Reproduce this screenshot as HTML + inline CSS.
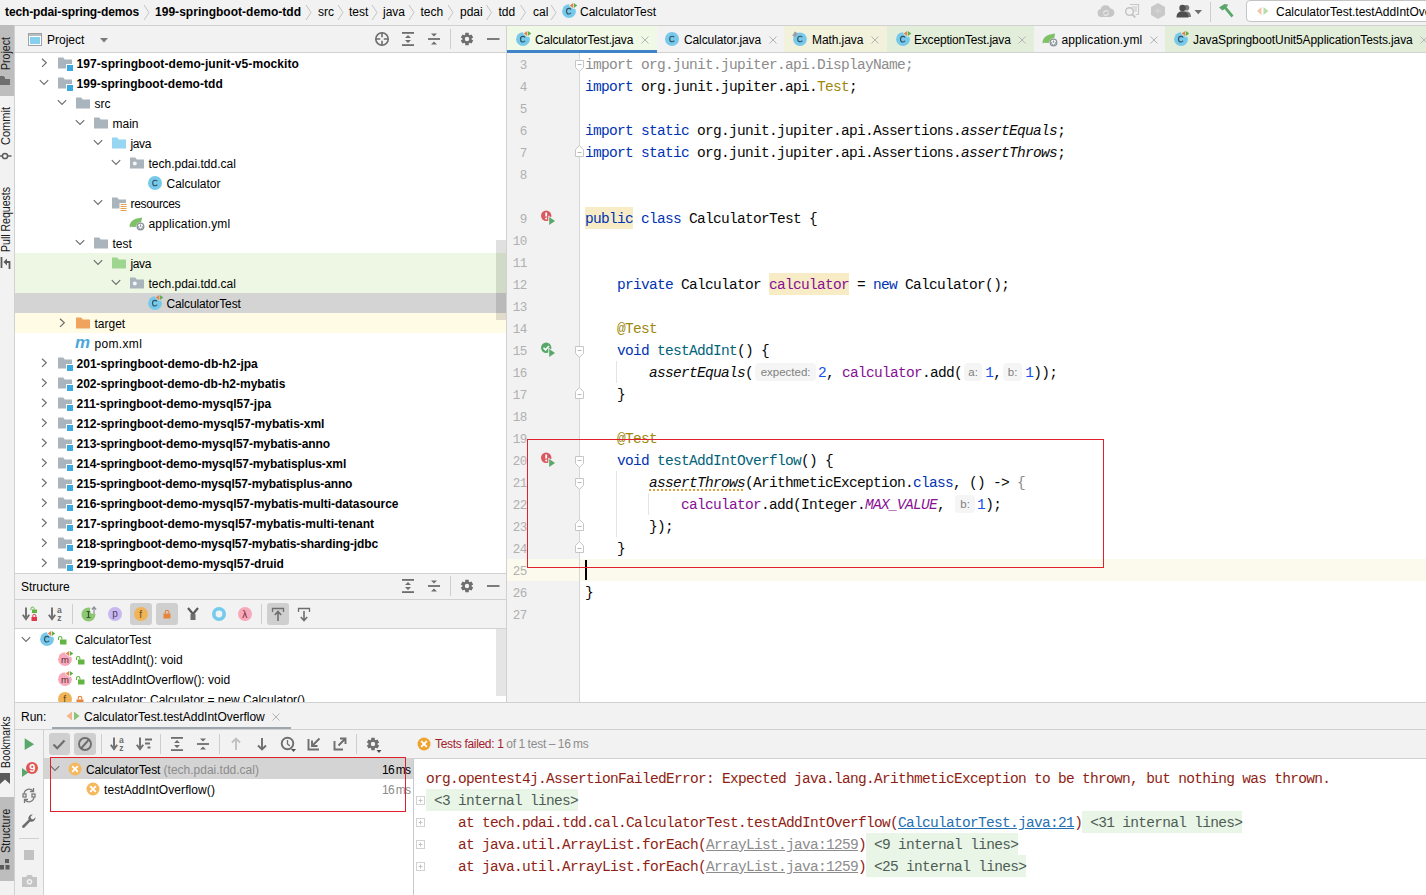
<!DOCTYPE html>
<html>
<head>
<meta charset="utf-8">
<title>IDE</title>
<style>
*{box-sizing:border-box;margin:0;padding:0}
html,body{width:1426px;height:895px;overflow:hidden;background:#f2f2f2}
body{font-family:"Liberation Sans",sans-serif;font-size:12px;color:#000;position:relative}
.abs{position:absolute}
.ui{font-family:"Liberation Sans",sans-serif;font-size:12px;white-space:pre;line-height:14px}
.b{font-weight:bold;letter-spacing:-0.05px}
.mono{font-family:"Liberation Mono",monospace;white-space:pre}
svg{display:block;position:absolute;overflow:visible}
/* navbar */
#nav{left:0;top:0;width:1426px;height:25px;background:#f2f2f2}
#nav .t{position:absolute;top:5px}
.hline{position:absolute;height:1px;background:#d1d1d1}
.vline{position:absolute;width:1px;background:#d1d1d1}
/* left stripe */
#stripe{left:0;top:25px;width:14px;height:870px;background:#f2f2f2}
.rot{position:absolute;transform-origin:0 0;transform:rotate(-90deg);white-space:pre;font-size:12px;line-height:14px;color:#1a1a1a}
/* project */
#proj{left:15px;top:26px;width:491px;height:547px;background:#fff}
.row{position:absolute;left:0;width:491px;height:20px}
.row .t{position:absolute;top:4px;white-space:pre;line-height:14px}
/* editor */
#tabs{left:507px;top:26px;width:919px;height:27px;background:#f2f2f2}
.tab{position:absolute;top:0;height:26px}
.tab .t{position:absolute;top:6px;white-space:pre;line-height:14px}
#gutter{left:507px;top:53px;width:72px;height:649px;background:#f0f0f0}
#editor{left:580px;top:53px;width:846px;height:649px;background:#fff}
.ln{position:absolute;left:507px;width:20px;text-align:right;font-family:"Liberation Mono",monospace;font-size:12.6px;color:#b0b0b0;line-height:22px;height:22px;letter-spacing:-0.4px;padding-top:2px}
.cl{position:absolute;left:585px;height:22px;font-family:"Liberation Mono",monospace;font-size:14.5px;letter-spacing:-0.7px;white-space:pre;color:#080808;line-height:24px}
.cl .hl{display:inline-block;height:22px;vertical-align:top;background:#f7ecc6}
.k{color:#0033b3}.an{color:#9e880d}.f{color:#871094}.m{color:#00627a}.n{color:#1750eb}.g{color:#8c8c8c}.i{font-style:italic}
.hint{display:inline-block;font-family:"Liberation Sans",sans-serif;font-size:11.5px;color:#808080;background:#f5f5f5;border-radius:4px;height:18px;line-height:18px;vertical-align:top;margin-top:2px;padding:0;text-align:center;letter-spacing:0}
.wavy{text-decoration:underline dotted #d9a343;text-decoration-thickness:1.500px;text-underline-offset:2px}
/* console */
.co{position:absolute;left:426px;height:22px;line-height:24px;font-family:"Liberation Mono",monospace;font-size:14.5px;letter-spacing:-0.7px;white-space:pre;color:#8f1d14}
.co span{display:inline-block;height:22px;vertical-align:top}
.fo{background:#e9f5e6;color:#4d5d55}
.lk{color:#2470b3;text-decoration:underline}
.lg{color:#8c8c8c;text-decoration:underline}
</style>
</head>
<body>
<svg width="0" height="0" style="position:absolute">
<defs>
<!-- chevrons -->
<symbol id="chr" viewBox="0 0 16 16"><path d="M6 3.7 L10.3 7.8 L6 11.9" fill="none" stroke="#6e6e6e" stroke-width="1.2"/></symbol>
<symbol id="chd" viewBox="0 0 16 16"><path d="M3.8 5.2 L8 9.4 L12.2 5.2" fill="none" stroke="#6e6e6e" stroke-width="1.2"/></symbol>
<!-- folders -->
<symbol id="fgrey" viewBox="0 0 16 16"><path d="M1 2.5h5.2l1.6 2H15v9H1z" fill="#aab4bc"/></symbol>
<symbol id="fmod" viewBox="0 0 16 16"><path d="M1 2.5h5.2l1.6 2H15v4.5H9v4.5H1z" fill="#aab4bc"/><rect x="10" y="10" width="6" height="6" fill="#3aa9e0"/></symbol>
<symbol id="fblue" viewBox="0 0 16 16"><path d="M1 2.5h5.2l1.6 2H15v9H1z" fill="#97d6f2"/></symbol>
<symbol id="fgreen" viewBox="0 0 16 16"><path d="M1 2.5h5.2l1.6 2H15v9H1z" fill="#9fd68f"/></symbol>
<symbol id="forange" viewBox="0 0 16 16"><path d="M1 2.5h5.2l1.6 2H15v9H1z" fill="#f0a35e"/></symbol>
<symbol id="fpkg" viewBox="0 0 16 16"><path d="M1 2.500h5.200l1.600 2H15v9H1z" fill="#aab4bc"/><circle cx="5.800" cy="8.500" r="2" fill="#f4f6f7"/></symbol>
<symbol id="fres" viewBox="0 0 16 16"><path d="M1 2.500h5.200l1.600 2H15v3.500H8.500v5.500H1z" fill="#aab4bc"/><path d="M9.500 9.500h6M9.500 11.500h6M9.500 13.500h6M9.500 15.500h6" stroke="#e9a14e" stroke-width="1"/></symbol>
<!-- class -->
<symbol id="cls" viewBox="0 0 16 16"><circle cx="8" cy="8" r="7" fill="#76c9ea"/><path d="M10.300 9.600c-.5.800-1.200 1.200-2.100 1.200-1.500 0-2.500-1.100-2.500-2.800s1-2.800 2.500-2.800c.9 0 1.600.4 2.100 1.100" fill="none" stroke="#33515f" stroke-width="1.100"/></symbol>
<symbol id="clst" viewBox="0 0 16 16"><mask id="mkc"><rect width="16" height="16" fill="#fff"/><path d="M8.300 0H16v5.800H12L8.300 3z" fill="#000"/></mask><circle cx="8" cy="8.200" r="6.900" fill="#76c9ea" mask="url(#mkc)"/><path d="M10.100 9.800c-.5.800-1.200 1.200-2.100 1.200-1.500 0-2.500-1.100-2.500-2.800s1-2.800 2.500-2.800c.9 0 1.600.4 2.100 1.100" fill="none" stroke="#33515f" stroke-width="1.100"/><path d="M12.100 0v5L8.700 2.500z" fill="#e8804a"/><path d="M12.800 0v5L16.300 2.500z" fill="#5fae4f"/></symbol>
<symbol id="mvn" viewBox="0 0 16 16"><text x="0" y="13" font-family="Liberation Sans" font-style="italic" font-weight="bold" font-size="16" fill="#4aa7dc" textLength="15" lengthAdjust="spacingAndGlyphs">m</text></symbol>
<symbol id="yml" viewBox="0 0 16 16"><path d="M.5 11.500c.5-5.500 4.500-8 12.500-9 0 5-2.500 9.500-8 9.500-1 0-2-.2-2.800-.6L1 12.500z" fill="#80c168"/><circle cx="11.500" cy="11.500" r="4.300" fill="#fff"/><circle cx="11.500" cy="11.500" r="3.300" fill="none" stroke="#8a9299" stroke-width="1.300"/><path d="M11.500 9.500v2.200" stroke="#8a9299" stroke-width="1.100"/><path d="M10 10.800a1.900 1.900 0 1 0 3 0" fill="none" stroke="#8a9299" stroke-width="1"/></symbol>
<symbol id="gear" viewBox="0 0 16 16"><path fill-rule="evenodd" fill="#6e6e6e" d="M6.12 3.80 L6.29 1.83 L9.71 1.83 L9.88 3.80 L10.70 4.28 L12.49 3.44 L14.20 6.39 L12.58 7.52 L12.58 8.48 L14.20 9.61 L12.49 12.56 L10.70 11.72 L9.88 12.20 L9.71 14.17 L6.29 14.17 L6.12 12.20 L5.30 11.72 L3.51 12.56 L1.80 9.61 L3.42 8.48 L3.42 7.52 L1.80 6.39 L3.51 3.44 L5.30 4.28Z M8 5.800a2.200 2.200 0 1 0 0 4.400a2.200 2.200 0 1 0 0-4.400z"/></symbol>

<symbol id="unlock" viewBox="0 0 10 10"><rect x="3" y="4.500" width="6.500" height="5" fill="#62b543"/><path d="M1.500 5V3.200a1.700 1.700 0 0 1 3.400 0V4.500" fill="none" stroke="#62b543" stroke-width="1.100"/></symbol>
<symbol id="lock" viewBox="0 0 10 10"><rect x="1.500" y="4.500" width="7" height="5" fill="#e8833a"/><path d="M3.200 4.500V3.200a1.800 1.800 0 0 1 3.600 0V4.500" fill="none" stroke="#e8833a" stroke-width="1.100"/></symbol>
<symbol id="meth" viewBox="0 0 16 16"><mask id="mkm"><rect width="16" height="16" fill="#fff"/><path d="M8.300 0H16v5.800H12L8.300 3z" fill="#000"/></mask><circle cx="8" cy="8.200" r="6.900" fill="#f7a9ba" mask="url(#mkm)"/><text x="4" y="11.500" font-family="Liberation Sans" font-size="9.500" fill="#5a2a35">m</text><path d="M12.100 0v5L8.700 2.500z" fill="#e8804a"/><path d="M12.800 0v5L16.300 2.500z" fill="#5fae4f"/></symbol>
<symbol id="fld" viewBox="0 0 16 16"><circle cx="8" cy="8" r="7" fill="#f0b458"/><text x="6.200" y="11.500" font-family="Liberation Sans" font-size="10" fill="#6b4a17">f</text></symbol>
<symbol id="clsp" viewBox="0 0 16 16"><circle cx="8" cy="8.300" r="6.800" fill="#76c9ea"/><path d="M10.300 9.600c-.5.800-1.200 1.200-2.100 1.200-1.500 0-2.500-1.100-2.500-2.800s1-2.800 2.500-2.800c.9 0 1.600.4 2.100 1.100" fill="none" stroke="#33515f" stroke-width="1.100"/><path d="M.3 4.800L2.800.5l3 1.700L3.300 6.300z" fill="#9aa0a5"/></symbol>
</defs>
</svg>

<div id="nav" class="abs ui">
<span class="t b" style="left:5px;letter-spacing:-0.12px">tech-pdai-spring-demos</span>
<span class="t b" style="left:155px;letter-spacing:0.03px">199-springboot-demo-tdd</span>
<span class="t" style="left:318px">src</span>
<span class="t" style="left:349px">test</span>
<span class="t" style="left:383px">java</span>
<span class="t" style="left:420.500px">tech</span>
<span class="t" style="left:460px">pdai</span>
<span class="t" style="left:498.500px">tdd</span>
<span class="t" style="left:533px">cal</span>
<span class="t" style="left:580px">CalculatorTest</span>
<svg style="left:0;top:0" width="700" height="25"><g fill="none" stroke="#c4c4c4" stroke-width="1">
<path d="M144 5l5 7.500-5 7.500"/><path d="M306 5l5 7.500-5 7.500"/><path d="M338 5l5 7.500-5 7.500"/><path d="M372 5l5 7.500-5 7.500"/><path d="M409 5l5 7.500-5 7.500"/><path d="M448 5l5 7.500-5 7.500"/><path d="M486.500 5l5 7.500-5 7.500"/><path d="M520.500 5l5 7.500-5 7.500"/><path d="M551 5l5 7.500-5 7.500"/></g></svg>
<svg style="left:561px;top:3px" width="16" height="16"><use href="#clst"/></svg>
<!-- right toolbar -->
<svg style="left:1097px;top:4px" width="18" height="14"><path d="M4.500 13a4 4 0 0 1-.8-7.900A5 5 0 0 1 13.300 4.500 4.200 4.200 0 0 1 13 13z" fill="#c6c6c6"/><path d="M6.500 9.500a2.800 2.800 0 0 1 4.800-2M11.500 8.500a2.800 2.800 0 0 1-4.800 2" stroke="#e6e6e6" stroke-width="1.100" fill="none"/></svg>
<svg style="left:1124px;top:3px" width="16" height="16"><path d="M6 1.500h8.500v10h-3" fill="none" stroke="#c8c8c8" stroke-width="1.200"/><path d="M8 4h5M9.500 6h3.500M10 8h3" stroke="#c8c8c8" stroke-width="1"/><circle cx="5.500" cy="8.500" r="3.800" fill="#f2f2f2" stroke="#c2c2c2" stroke-width="1.400"/><path d="M8.300 11.300l3 3.200" stroke="#c2c2c2" stroke-width="1.800"/></svg>
<svg style="left:1150px;top:2px" width="16" height="18"><path d="M8 1l7 4v8l-7 4-7-4V5z" fill="#c9c9c9"/><path d="M5 9h6M8 6.500v5" stroke="#d8d8d8" stroke-width="1"/></svg>
<svg style="left:1176px;top:4px" width="28" height="14"><circle cx="10.500" cy="3.800" r="2.800" fill="#7a7a7a"/><path d="M6 13c0-4 2-5.500 4.500-5.500s4.500 1.500 4.500 5.500z" fill="#7a7a7a"/><circle cx="6.500" cy="4" r="3.200" fill="#4f4f4f"/><path d="M.5 13.500c0-4.500 2.500-6.200 6-6.200s6 1.700 6 6.200z" fill="#4f4f4f"/><path d="M18.500 6h7.500l-3.750 4.200z" fill="#6e6e6e"/></svg>
<svg style="left:1218px;top:3px" width="17" height="16"><path d="M1 4.500L6.500 1l4 .8-2 2.200L15.500 12.500 13.500 14.500 6.500 6 4.500 7.500z" fill="#59a869"/></svg>

<div class="abs" style="left:1246px;top:0px;width:190px;height:22px;background:#fff;border:1px solid #c4c4c4;border-radius:4px"></div>
<svg style="left:1257px;top:7px" width="12" height="8"><path d="M4.500 0v8L0 4z" fill="#f4c4a8"/><path d="M6.500 0v8L11.500 4z" fill="#b9dcae"/></svg>
<span class="t" style="left:1276px;top:5px">CalculatorTest.testAddIntOverflow</span>
<div class="vline" style="left:1210px;top:2px;height:20px;background:#cdcdcd"></div>
</div>
<div class="hline" style="left:0;top:25px;width:1426px"></div>

<div id="stripe" class="abs" style="left:0;top:25px;width:14px;height:870px;background:#f2f2f2">
<div class="abs" style="left:0;top:0;width:14px;height:71px;background:#bdbdbd"></div>
<div class="abs" style="left:0;top:772px;width:14px;height:84px;background:#bdbdbd"></div>
<span class="rot" style="left:-1.500px;top:44.5px;transform:rotate(-90deg) scaleX(0.883)">Project</span>
<span class="rot" style="left:-1.500px;top:120px;transform:rotate(-90deg) scaleX(0.919)">Commit</span>
<span class="rot" style="left:-1.500px;top:227px;transform:rotate(-90deg) scaleX(0.878)">Pull Requests</span>
<span class="rot" style="left:-1.500px;top:742.5px;transform:rotate(-90deg) scaleX(0.861)">Bookmarks</span>
<span class="rot" style="left:-1.500px;top:828px;transform:rotate(-90deg) scaleX(0.912)">Structure</span>
<!-- icons -->
<svg style="left:0;top:50px" width="11" height="11"><path d="M0 1h3.500l1.500 1.500V4H10v6H0z" fill="#6e6e6e"/></svg>
<svg style="left:0;top:126px" width="12" height="10"><path d="M0 5h11.500" stroke="#5a5a5a" stroke-width="1.400"/><circle cx="5" cy="5" r="2.600" fill="#f2f2f2" stroke="#5a5a5a" stroke-width="1.500"/></svg>
<svg style="left:0;top:231px" width="12" height="14"><path d="M1.500 1v11" stroke="#5a5a5a" stroke-width="1.800"/><path d="M4.500 6h5v7" fill="none" stroke="#5a5a5a" stroke-width="1.800"/><path d="M7 2.500L3.500 6 7 9.500z" fill="#5a5a5a"/></svg>
<svg style="left:0;top:748px" width="11" height="12"><path d="M0 0h10v11L5 6.500 0 11z" fill="#5a5a5a"/></svg>
<svg style="left:0;top:834px" width="11" height="11"><rect x="5" y="0" width="4" height="4" fill="#5a5a5a"/><rect x="0" y="6" width="4" height="4.500" fill="#5a5a5a"/><rect x="5.500" y="6" width="4" height="4.500" fill="#5a5a5a"/></svg>
</div>
<div class="vline" style="left:14px;top:26px;height:869px"></div>

<div class="abs" style="left:15px;top:26px;width:491px;height:26px;background:#f2f2f2"></div>
<div class="hline" style="left:15px;top:52px;width:491px"></div>
<div id="proj" class="abs ui" style="left:15px;top:53px;width:491px;height:520px;background:#fff;overflow:hidden">
<div class="row" style="top:0px;">
<svg style="left:21px;top:2px" width="16" height="16"><use href="#chr"/></svg>
<svg style="left:42px;top:2px" width="16" height="16"><use href="#fmod"/></svg>
<span class="t b" style="left:61.5px;letter-spacing:0.088px">197-springboot-demo-junit-v5-mockito</span>
</div>
<div class="row" style="top:20px;">
<svg style="left:21px;top:2px" width="16" height="16"><use href="#chd"/></svg>
<svg style="left:42px;top:2px" width="16" height="16"><use href="#fmod"/></svg>
<span class="t b" style="left:61.5px;letter-spacing:0.042px">199-springboot-demo-tdd</span>
</div>
<div class="row" style="top:40px;">
<svg style="left:39px;top:2px" width="16" height="16"><use href="#chd"/></svg>
<svg style="left:60px;top:2px" width="16" height="16"><use href="#fgrey"/></svg>
<span class="t" style="left:79.5px">src</span>
</div>
<div class="row" style="top:60px;">
<svg style="left:57px;top:2px" width="16" height="16"><use href="#chd"/></svg>
<svg style="left:78px;top:2px" width="16" height="16"><use href="#fgrey"/></svg>
<span class="t" style="left:97.5px">main</span>
</div>
<div class="row" style="top:80px;">
<svg style="left:75px;top:2px" width="16" height="16"><use href="#chd"/></svg>
<svg style="left:96px;top:2px" width="16" height="16"><use href="#fblue"/></svg>
<span class="t" style="left:115.5px;letter-spacing:-0.400px">java</span>
</div>
<div class="row" style="top:100px;">
<svg style="left:93px;top:2px" width="16" height="16"><use href="#chd"/></svg>
<svg style="left:114px;top:2px" width="16" height="16"><use href="#fpkg"/></svg>
<span class="t" style="left:133.5px">tech.pdai.tdd.cal</span>
</div>
<div class="row" style="top:120px;">
<svg style="left:132px;top:2px" width="16" height="16"><use href="#cls"/></svg>
<span class="t" style="left:151.5px">Calculator</span>
</div>
<div class="row" style="top:140px;">
<svg style="left:75px;top:2px" width="16" height="16"><use href="#chd"/></svg>
<svg style="left:96px;top:2px" width="16" height="16"><use href="#fres"/></svg>
<span class="t" style="left:115.5px;letter-spacing:-0.322px">resources</span>
</div>
<div class="row" style="top:160px;">
<svg style="left:114px;top:2px" width="16" height="16"><use href="#yml"/></svg>
<span class="t" style="left:133.5px;letter-spacing:0.160px">application.yml</span>
</div>
<div class="row" style="top:180px;">
<svg style="left:57px;top:2px" width="16" height="16"><use href="#chd"/></svg>
<svg style="left:78px;top:2px" width="16" height="16"><use href="#fgrey"/></svg>
<span class="t" style="left:97.5px">test</span>
</div>
<div class="row" style="top:200px;background:#eef7e3;">
<svg style="left:75px;top:2px" width="16" height="16"><use href="#chd"/></svg>
<svg style="left:96px;top:2px" width="16" height="16"><use href="#fgreen"/></svg>
<span class="t" style="left:115.5px;letter-spacing:-0.400px">java</span>
</div>
<div class="row" style="top:220px;background:#eef7e3;">
<svg style="left:93px;top:2px" width="16" height="16"><use href="#chd"/></svg>
<svg style="left:114px;top:2px" width="16" height="16"><use href="#fpkg"/></svg>
<span class="t" style="left:133.5px">tech.pdai.tdd.cal</span>
</div>
<div class="row" style="top:240px;background:#d4d4d4;">
<svg style="left:132px;top:2px" width="16" height="16"><use href="#clst"/></svg>
<span class="t" style="left:151.5px;letter-spacing:-0.129px">CalculatorTest</span>
</div>
<div class="row" style="top:260px;background:#fffbe5;">
<svg style="left:39px;top:2px" width="16" height="16"><use href="#chr"/></svg>
<svg style="left:60px;top:2px" width="16" height="16"><use href="#forange"/></svg>
<span class="t" style="left:79.5px">target</span>
</div>
<div class="row" style="top:280px;">
<svg style="left:60px;top:2px" width="16" height="16"><use href="#mvn"/></svg>
<span class="t" style="left:79.5px;letter-spacing:0.329px">pom.xml</span>
</div>
<div class="row" style="top:300px;">
<svg style="left:21px;top:2px" width="16" height="16"><use href="#chr"/></svg>
<svg style="left:42px;top:2px" width="16" height="16"><use href="#fmod"/></svg>
<span class="t b" style="left:61.5px;letter-spacing:0.022px">201-springboot-demo-db-h2-jpa</span>
</div>
<div class="row" style="top:320px;">
<svg style="left:21px;top:2px" width="16" height="16"><use href="#chr"/></svg>
<svg style="left:42px;top:2px" width="16" height="16"><use href="#fmod"/></svg>
<span class="t b" style="left:61.5px;letter-spacing:0.006px">202-springboot-demo-db-h2-mybatis</span>
</div>
<div class="row" style="top:340px;">
<svg style="left:21px;top:2px" width="16" height="16"><use href="#chr"/></svg>
<svg style="left:42px;top:2px" width="16" height="16"><use href="#fmod"/></svg>
<span class="t b" style="left:61.5px;letter-spacing:-0.025px">211-springboot-demo-mysql57-jpa</span>
</div>
<div class="row" style="top:360px;">
<svg style="left:21px;top:2px" width="16" height="16"><use href="#chr"/></svg>
<svg style="left:42px;top:2px" width="16" height="16"><use href="#fmod"/></svg>
<span class="t b" style="left:61.5px;letter-spacing:-0.021px">212-springboot-demo-mysql57-mybatis-xml</span>
</div>
<div class="row" style="top:380px;">
<svg style="left:21px;top:2px" width="16" height="16"><use href="#chr"/></svg>
<svg style="left:42px;top:2px" width="16" height="16"><use href="#fmod"/></svg>
<span class="t b" style="left:61.5px;letter-spacing:-0.078px">213-springboot-demo-mysql57-mybatis-anno</span>
</div>
<div class="row" style="top:400px;">
<svg style="left:21px;top:2px" width="16" height="16"><use href="#chr"/></svg>
<svg style="left:42px;top:2px" width="16" height="16"><use href="#fmod"/></svg>
<span class="t b" style="left:61.5px;letter-spacing:-0.086px">214-springboot-demo-mysql57-mybatisplus-xml</span>
</div>
<div class="row" style="top:420px;">
<svg style="left:21px;top:2px" width="16" height="16"><use href="#chr"/></svg>
<svg style="left:42px;top:2px" width="16" height="16"><use href="#fmod"/></svg>
<span class="t b" style="left:61.5px;letter-spacing:-0.127px">215-springboot-demo-mysql57-mybatisplus-anno</span>
</div>
<div class="row" style="top:440px;">
<svg style="left:21px;top:2px" width="16" height="16"><use href="#chr"/></svg>
<svg style="left:42px;top:2px" width="16" height="16"><use href="#fmod"/></svg>
<span class="t b" style="left:61.5px;letter-spacing:-0.054px">216-springboot-demo-mysql57-mybatis-multi-datasource</span>
</div>
<div class="row" style="top:460px;">
<svg style="left:21px;top:2px" width="16" height="16"><use href="#chr"/></svg>
<svg style="left:42px;top:2px" width="16" height="16"><use href="#fmod"/></svg>
<span class="t b" style="left:61.5px;letter-spacing:0.019px">217-springboot-demo-mysql57-mybatis-multi-tenant</span>
</div>
<div class="row" style="top:480px;">
<svg style="left:21px;top:2px" width="16" height="16"><use href="#chr"/></svg>
<svg style="left:42px;top:2px" width="16" height="16"><use href="#fmod"/></svg>
<span class="t b" style="left:61.5px;letter-spacing:-0.120px">218-springboot-demo-mysql57-mybatis-sharding-jdbc</span>
</div>
<div class="row" style="top:500px;">
<svg style="left:21px;top:2px" width="16" height="16"><use href="#chr"/></svg>
<svg style="left:42px;top:2px" width="16" height="16"><use href="#fmod"/></svg>
<span class="t b" style="left:61.5px;letter-spacing:-0.039px">219-springboot-demo-mysql57-druid</span>
</div>
<div class="abs" style="left:481px;top:187px;width:10px;height:80px;background:rgba(0,0,0,0.12)"></div>
</div>
<div class="vline" style="left:506px;top:26px;height:676px"></div>
<div class="abs ui" style="left:15px;top:26px;width:491px;height:26px">
<svg style="left:13px;top:7px" width="14" height="13"><rect x=".5" y=".5" width="13" height="12" fill="#fff" stroke="#9ba3a8"/><rect x="1" y="1" width="12" height="2" fill="#b9bdc0"/><rect x="2" y="4" width="10" height="7" fill="#87cfee"/></svg>
<span class="abs" style="left:32px;top:7px">Project</span>
<svg style="left:85px;top:12px" width="8" height="5"><path d="M0 0h8l-4 4.500z" fill="#7a7a7a"/></svg>
<svg style="left:359px;top:5px" width="16" height="16"><g fill="none" stroke="#6e6e6e" stroke-width="1.600"><circle cx="8" cy="8" r="6.200"/><path d="M8 1.500v4.800M8 9.700v4.800M1.500 8h4.800M9.700 8h4.800"/></g></svg>
<svg style="left:385px;top:5px" width="16" height="16"><g fill="#6e6e6e"><rect x="2" y="1" width="12" height="1.800"/><rect x="2" y="13.200" width="12" height="1.800"/><path d="M8 4l3 3h-6zM8 12l3-3h-6z"/></g></svg>
<svg style="left:411px;top:5px" width="16" height="16"><g fill="#6e6e6e"><rect x="2" y="7.100" width="12" height="1.800"/><path d="M8 5.500l3-3h-6zM8 10.500l3 3h-6z"/></g></svg>
<div class="vline" style="left:435px;top:3px;height:20px;background:#cdcdcd"></div>
<svg style="left:444px;top:5px" width="16" height="16"><use href="#gear"/></svg>
<svg style="left:471px;top:5px" width="16" height="16"><rect x="1" y="7.100" width="12.500" height="1.800" fill="#6e6e6e"/></svg>
</div>
<div class="hline" style="left:15px;top:573px;width:491px"></div>
<div id="struct" class="abs ui" style="left:15px;top:574px;width:491px;height:128px;background:#f2f2f2">
<span class="abs" style="left:6px;top:6px">Structure</span>
<svg style="left:385px;top:4px" width="16" height="16"><g fill="#6e6e6e"><rect x="2" y="1" width="12" height="1.800"/><rect x="2" y="13.200" width="12" height="1.800"/><path d="M8 4l3 3h-6zM8 12l3-3h-6z"/></g></svg>
<svg style="left:411px;top:4px" width="16" height="16"><g fill="#6e6e6e"><rect x="2" y="7.100" width="12" height="1.800"/><path d="M8 5.500l3-3h-6zM8 10.500l3 3h-6z"/></g></svg>
<div class="vline" style="left:435px;top:2px;height:20px;background:#cdcdcd"></div>
<svg style="left:444px;top:4px" width="16" height="16"><use href="#gear"/></svg>
<svg style="left:471px;top:4px" width="16" height="16"><rect x="1" y="7.100" width="12.500" height="1.800" fill="#6e6e6e"/></svg>
<div class="hline" style="left:0;top:25px;width:491px"></div>
<!-- toolbar y 26..54 ; center y=40 (abs 614) -->
<div class="abs" style="left:115px;top:29px;width:22px;height:22px;background:#cfcfcf;border-radius:3px"></div>
<div class="abs" style="left:141px;top:29px;width:22px;height:22px;background:#cfcfcf;border-radius:3px"></div>
<div class="abs" style="left:252px;top:29px;width:22px;height:22px;background:#cfcfcf;border-radius:3px"></div>
<svg style="left:7px;top:32px" width="16" height="16"><path d="M4 1.500v10" fill="none" stroke="#6e6e6e" stroke-width="1.900"/><path d="M.8 8.800L4 13.200 7.200 8.800" fill="none" stroke="#6e6e6e" stroke-width="1.900"/><rect x="10" y="3.500" width="5" height="3.500" fill="#62b543"/><path d="M9 4V2.500a1.500 1.500 0 0 1 3 0V3.500" fill="none" stroke="#62b543"/><rect x="9.500" y="11" width="5.500" height="4" fill="#e0384b"/><path d="M10.800 11V9.800a1.500 1.500 0 0 1 3 0V11" fill="none" stroke="#e0384b"/></svg>
<svg style="left:33px;top:32px" width="16" height="16"><path d="M4 1.500v10" fill="none" stroke="#6e6e6e" stroke-width="1.900"/><path d="M.8 8.800L4 13.200 7.200 8.800" fill="none" stroke="#6e6e6e" stroke-width="1.900"/><text x="9" y="7" font-family="Liberation Sans" font-size="8.500" font-weight="bold" fill="#6e6e6e">a</text><text x="9.300" y="14.500" font-family="Liberation Sans" font-size="8.500" font-weight="bold" fill="#6e6e6e">z</text></svg>
<div class="vline" style="left:57px;top:30px;height:20px;background:#cdcdcd"></div>
<svg style="left:66px;top:32px" width="16" height="16"><circle cx="7.500" cy="8.500" r="7" fill="#8dc773"/><path d="M5.500 5.500h4M5.500 11.500h4M7.500 5.500v6" stroke="#34552a" stroke-width="1.200" fill="none"/><circle cx="13" cy="4" r="4" fill="#f2f2f2"/><path d="M13 8V1.500M10.800 3.500L13 1l2.200 2.500" fill="none" stroke="#8a9197" stroke-width="1.200"/></svg>
<svg style="left:92px;top:32px" width="16" height="16"><circle cx="8" cy="8" r="7" fill="#c9b7f0"/><text x="5.200" y="11" font-family="Liberation Sans" font-size="10" fill="#4b3f6b">p</text></svg>
<svg style="left:118px;top:32px" width="16" height="16"><use href="#fld"/></svg>
<svg style="left:147px;top:35px" width="10" height="10"><use href="#lock"/></svg>
<svg style="left:170px;top:32px" width="16" height="16"><path d="M3 2l5 6 5-6" fill="none" stroke="#5a5a5a" stroke-width="2.200"/><rect x="5.500" y="8" width="5" height="6" fill="#6e6e6e"/></svg>
<svg style="left:196px;top:32px" width="16" height="16"><circle cx="8" cy="8" r="5.200" fill="none" stroke="#73cbed" stroke-width="3.600"/></svg>
<svg style="left:222px;top:32px" width="16" height="16"><circle cx="8" cy="8" r="7" fill="#f7a9ba"/><text x="5.300" y="11.500" font-family="Liberation Sans" font-size="10" fill="#6b2a3a">λ</text></svg>
<div class="vline" style="left:246px;top:30px;height:20px;background:#cdcdcd"></div>
<svg style="left:255px;top:32px" width="16" height="16"><path d="M2.500 6V2.500h11V6" fill="none" stroke="#6e6e6e" stroke-width="1.300"/><path d="M8 15V6.500M4.800 9L8 5.500 11.200 9" fill="none" stroke="#6e6e6e" stroke-width="1.600"/></svg>
<svg style="left:281px;top:32px" width="16" height="16"><path d="M2.500 6V2.500h11V6" fill="none" stroke="#6e6e6e" stroke-width="1.300"/><path d="M8 5V14M4.800 11L8 14.500 11.200 11" fill="none" stroke="#6e6e6e" stroke-width="1.600"/></svg>
<div class="hline" style="left:0;top:54px;width:491px"></div>
<!-- tree -->
<div class="abs" style="left:0;top:55px;width:491px;height:73px;background:#fff;overflow:hidden">
<svg style="left:3px;top:3px" width="16" height="16"><use href="#chd"/></svg>
<svg style="left:24px;top:2px" width="16" height="16"><use href="#clst"/></svg>
<svg style="left:42px;top:6px" width="10" height="10"><use href="#unlock"/></svg>
<span class="abs" style="left:60px;top:4px">CalculatorTest</span>
<svg style="left:42px;top:22px" width="16" height="16"><use href="#meth"/></svg>
<svg style="left:60px;top:26px" width="10" height="10"><use href="#unlock"/></svg>
<span class="abs" style="left:77px;top:24px">testAddInt(): void</span>
<svg style="left:42px;top:42px" width="16" height="16"><use href="#meth"/></svg>
<svg style="left:60px;top:46px" width="10" height="10"><use href="#unlock"/></svg>
<span class="abs" style="left:77px;top:44px">testAddIntOverflow(): void</span>
<svg style="left:42px;top:62px" width="16" height="16"><use href="#fld"/></svg>
<svg style="left:60px;top:66px" width="10" height="10"><use href="#lock"/></svg>
<span class="abs" style="left:77px;top:64px">calculator: Calculator = new Calculator()</span>
<div class="abs" style="left:481px;top:0;width:10px;height:67px;background:rgba(0,0,0,0.10)"></div>
</div>
</div>
<div class="hline" style="left:15px;top:702px;width:1411px"></div>

<div id="tabs" class="abs ui" style="left:507px;top:26px;width:919px;height:27px;background:#f2f2f2;overflow:hidden">
<div class="tab" style="left:0px;width:150px;background:#f0f8e6"></div>
<svg style="left:8px;top:5px" width="16" height="16"><use href="#clst"/></svg>
<span class="abs" style="left:28px;top:7px;letter-spacing:-0.17px">CalculatorTest.java</span>
<svg style="left:134px;top:9.500px" width="8" height="8"><path d="M.5.5l7 7M7.500.5l-7 7" stroke="#b4b4b4" stroke-width="1" fill="none"/></svg>
<div class="tab" style="left:150px;width:127px;background:#f2f2f2"></div>
<svg style="left:157px;top:5px" width="16" height="16"><use href="#cls"/></svg>
<span class="abs" style="left:177px;top:7px;letter-spacing:-0.11px">Calculator.java</span>
<svg style="left:262px;top:9.500px" width="8" height="8"><path d="M.5.5l7 7M7.500.5l-7 7" stroke="#b4b4b4" stroke-width="1" fill="none"/></svg>
<div class="tab" style="left:277px;width:103px;background:#f1f1dc"></div>
<svg style="left:285px;top:5px" width="16" height="16"><use href="#clsp"/></svg>
<span class="abs" style="left:305px;top:7px;letter-spacing:-0.09px">Math.java</span>
<svg style="left:364px;top:9.500px" width="8" height="8"><path d="M.5.5l7 7M7.500.5l-7 7" stroke="#b4b4b4" stroke-width="1" fill="none"/></svg>
<div class="tab" style="left:380px;width:147px;background:#e2eeda"></div>
<svg style="left:388px;top:5px" width="16" height="16"><use href="#clst"/></svg>
<span class="abs" style="left:407px;top:7px;letter-spacing:-0.19px">ExceptionTest.java</span>
<svg style="left:511px;top:9.500px" width="8" height="8"><path d="M.5.5l7 7M7.500.5l-7 7" stroke="#b4b4b4" stroke-width="1" fill="none"/></svg>
<div class="tab" style="left:527px;width:131px;background:#f2f2f2"></div>
<svg style="left:535px;top:5px" width="16" height="16"><use href="#yml"/></svg>
<span class="abs" style="left:554.5px;top:7px;letter-spacing:0.09px">application.yml</span>
<svg style="left:643px;top:9.500px" width="8" height="8"><path d="M.5.5l7 7M7.500.5l-7 7" stroke="#b4b4b4" stroke-width="1" fill="none"/></svg>
<div class="tab" style="left:658px;width:261px;background:#e2eeda"></div>
<svg style="left:666px;top:5px" width="16" height="16"><use href="#clst"/></svg>
<span class="abs" style="left:686px;top:7px;letter-spacing:-0.095px">JavaSpringbootUnit5ApplicationTests.java</span>
<svg style="left:913px;top:9.500px" width="8" height="8"><path d="M.5.5l7 7M7.500.5l-7 7" stroke="#b4b4b4" stroke-width="1" fill="none"/></svg>
<div class="abs" style="left:0;top:24px;width:150px;height:3px;background:#4083c9"></div>
<div class="hline" style="left:150px;top:26px;width:769px"></div>
</div>
<div id="gutter" class="abs" style="left:507px;top:53px;width:72px;height:649px;background:#f2f2f2"></div>
<div class="vline" style="left:579px;top:53px;height:649px;background:#d6d6d6"></div>
<div class="ln" style="top:53px">3</div>
<div class="ln" style="top:75px">4</div>
<div class="ln" style="top:97px">5</div>
<div class="ln" style="top:119px">6</div>
<div class="ln" style="top:141px">7</div>
<div class="ln" style="top:163px">8</div>
<div class="ln" style="top:207px">9</div>
<div class="ln" style="top:229px">10</div>
<div class="ln" style="top:251px">11</div>
<div class="ln" style="top:273px">12</div>
<div class="ln" style="top:295px">13</div>
<div class="ln" style="top:317px">14</div>
<div class="ln" style="top:339px">15</div>
<div class="ln" style="top:361px">16</div>
<div class="ln" style="top:383px">17</div>
<div class="ln" style="top:405px">18</div>
<div class="ln" style="top:427px">19</div>
<div class="ln" style="top:449px">20</div>
<div class="ln" style="top:471px">21</div>
<div class="ln" style="top:493px">22</div>
<div class="ln" style="top:515px">23</div>
<div class="ln" style="top:537px">24</div>
<div class="ln" style="top:559px">25</div>
<div class="ln" style="top:581px">26</div>
<div class="ln" style="top:603px">27</div>
<div id="editor" class="abs" style="left:580px;top:53px;width:846px;height:649px;background:#fff"></div>
<div class="abs" style="left:507px;top:559px;width:919px;height:22px;background:#fcfaed"></div>
<div class="ln" style="top:559px">25</div>
<div class="vline" style="left:579px;top:559px;height:22px;background:#d6d6d6"></div>
<div class="cl" style="top:53px"><span class="g">import org.junit.jupiter.api.DisplayName;</span></div>
<div class="cl" style="top:75px"><span class="k">import</span> org.junit.jupiter.api.<span class="an">Test</span>;</div>
<div class="cl" style="top:119px"><span class="k">import static</span> org.junit.jupiter.api.Assertions.<span class="i">assertEquals</span>;</div>
<div class="cl" style="top:141px"><span class="k">import static</span> org.junit.jupiter.api.Assertions.<span class="i">assertThrows</span>;</div>
<div class="cl" style="top:207px"><span class="k hl">public</span> <span class="k">class</span> CalculatorTest {</div>
<div class="cl" style="top:273px">    <span class="k">private</span> Calculator <span class="f hl">calculator</span> = <span class="k">new</span> Calculator();</div>
<div class="cl" style="top:317px">    <span class="an">@Test</span></div>
<div class="cl" style="top:339px">    <span class="k">void</span> <span class="m">testAddInt</span>() {</div>
<div class="cl" style="top:361px">        <span class="i">assertEquals</span>(<span class="hint" style="margin-left:2px;width:61px;margin-right:2px">expected:</span><span class="n">2</span>, <span class="f">calculator</span>.add(<span class="hint" style="margin-left:2px;width:18px;margin-right:3px">a:</span><span class="n">1</span>,<span class="hint" style="margin-left:2px;width:19px;margin-right:3px">b:</span><span class="n">1</span>));</div>
<div class="cl" style="top:383px">    }</div>
<div class="cl" style="top:427px">    <span class="an">@Test</span></div>
<div class="cl" style="top:449px">    <span class="k">void</span> <span class="m">testAddIntOverflow</span>() {</div>
<div class="cl" style="top:471px">        <span class="i wavy">assertThrows</span>(ArithmeticException.<span class="k">class</span>, () -> <span class="g">{</span></div>
<div class="cl" style="top:493px">            <span class="f">calculator</span>.add(Integer.<span class="f i">MAX_VALUE</span>, <span class="hint" style="margin-left:2px;width:20px;margin-right:2px">b:</span><span class="n">1</span>);</div>
<div class="cl" style="top:515px">        });</div>
<div class="cl" style="top:537px">    }</div>
<div class="cl" style="top:581px">}</div>
<div class="abs" style="left:585px;top:560px;width:2px;height:20px;background:#000"></div>
<div class="vline" style="left:616px;top:361px;height:22px;background:#e4e4e4"></div>
<div class="vline" style="left:616px;top:471px;height:66px;background:#e4e4e4"></div>
<div class="vline" style="left:648px;top:493px;height:22px;background:#e4e4e4"></div>
<svg style="left:575px;top:60px" width="9" height="12"><path d="M.5.5h8v7L4.500 11.300.5 7.500z" fill="#fff" stroke="#c6c6c6"/><path d="M2.500 4.500h4" stroke="#b8b8b8"/></svg>
<svg style="left:575px;top:346px" width="9" height="12"><path d="M.5.5h8v7L4.500 11.300.5 7.500z" fill="#fff" stroke="#c6c6c6"/><path d="M2.500 4.500h4" stroke="#b8b8b8"/></svg>
<svg style="left:575px;top:456px" width="9" height="12"><path d="M.5.5h8v7L4.500 11.300.5 7.500z" fill="#fff" stroke="#c6c6c6"/><path d="M2.500 4.500h4" stroke="#b8b8b8"/></svg>
<svg style="left:575px;top:478px" width="9" height="12"><path d="M.5.5h8v7L4.500 11.300.5 7.500z" fill="#fff" stroke="#c6c6c6"/><path d="M2.500 4.500h4" stroke="#b8b8b8"/></svg>
<svg style="left:575px;top:145px" width="9" height="12"><path d="M.5 11.500h8v-7L4.500.700.5 4.500z" fill="#fff" stroke="#c6c6c6"/><path d="M2.500 7.500h4" stroke="#b8b8b8"/></svg>
<svg style="left:575px;top:387px" width="9" height="12"><path d="M.5 11.500h8v-7L4.500.700.5 4.500z" fill="#fff" stroke="#c6c6c6"/><path d="M2.500 7.500h4" stroke="#b8b8b8"/></svg>
<svg style="left:575px;top:519px" width="9" height="12"><path d="M.5 11.500h8v-7L4.500.700.5 4.500z" fill="#fff" stroke="#c6c6c6"/><path d="M2.500 7.500h4" stroke="#b8b8b8"/></svg>
<svg style="left:575px;top:541px" width="9" height="12"><path d="M.5 11.500h8v-7L4.500.700.5 4.500z" fill="#fff" stroke="#c6c6c6"/><path d="M2.500 7.500h4" stroke="#b8b8b8"/></svg>
<svg style="left:541px;top:210px" width="15" height="16"><circle cx="5.200" cy="5.800" r="5.200" fill="#db5860"/><path d="M5.200 2.500v4" stroke="#fff" stroke-width="1.800"/><circle cx="5.200" cy="8.600" r="1" fill="#fff"/><path d="M7.300 5.500v10l7-5z" fill="#f2f2f2"/><path d="M8.200 7v8l5.800-4z" fill="#59a869"/></svg>
<svg style="left:541px;top:342px" width="15" height="16"><circle cx="5.200" cy="5.800" r="5.200" fill="#59a869"/><path d="M2.500 5.800l2 2 3.500-3.800" stroke="#fff" stroke-width="1.600" fill="none"/><path d="M7.300 5.500v10l7-5z" fill="#f2f2f2"/><path d="M8.200 7v8l5.800-4z" fill="#59a869"/></svg>
<svg style="left:541px;top:452px" width="15" height="16"><circle cx="5.200" cy="5.800" r="5.200" fill="#db5860"/><path d="M5.200 2.500v4" stroke="#fff" stroke-width="1.800"/><circle cx="5.200" cy="8.600" r="1" fill="#fff"/><path d="M7.300 5.500v10l7-5z" fill="#f2f2f2"/><path d="M8.200 7v8l5.800-4z" fill="#59a869"/></svg>
<div id="run" class="abs ui" style="left:15px;top:703px;width:1411px;height:192px;background:#f2f2f2">
<!-- header 703..728 -->
<span class="abs" style="left:6px;top:7px">Run:</span>
<svg style="left:51px;top:6px" width="14" height="14"><path d="M6 2.500v9L.5 7z" fill="#f2b78c"/><path d="M8 2.500v9L13.500 7z" fill="#8cc27a"/></svg>
<span class="abs" style="left:69px;top:7px">CalculatorTest.testAddIntOverflow</span>
<svg style="left:257px;top:9.500px" width="8" height="8"><path d="M.5.5l7 7M7.500.5l-7 7" stroke="#b4b4b4" stroke-width="1" fill="none"/></svg>
<div class="abs" style="left:37px;top:24px;width:239px;height:3px;background:#9ea7b0"></div>
<div class="hline" style="left:0;top:26px;width:1411px"></div>
<!-- left toolbar column x 15..43 -->
<div class="vline" style="left:28px;top:27px;height:165px"></div>
<svg style="left:7px;top:34px" width="16" height="16"><path d="M2.700 1.300L12.100 7.200 2.700 13z" fill="#59a869"/></svg>
<svg style="left:6px;top:58px" width="18" height="18"><path d="M1 7l6.500 4.500L1 16z" fill="#59a869"/><circle cx="11" cy="7" r="6" fill="#e05555"/><text x="8.300" y="11" font-family="Liberation Sans" font-weight="bold" font-size="11" fill="#fff">9</text></svg>
<svg style="left:6px;top:84px" width="16" height="17"><g fill="none" stroke="#7a7a7a" stroke-width="1.300"><path d="M3 6.500A5.200 5.200 0 0 1 12 4"/><path d="M13 10.500A5.200 5.200 0 0 1 4 13"/><path d="M12.500 1v3.500H9M3.500 16v-3.500H7"/><rect x="2" y="7" width="3" height="3"/><rect x="11" y="7" width="3" height="3"/></g></svg>
<svg style="left:6px;top:110px" width="16" height="16"><path d="M14.500 4.200a4 4 0 0 1-5.300 4.300L3.500 14.500a1.400 1.400 0 0 1-2-2L7.500 6.800A4 4 0 0 1 11.800 1.500L9.500 3.800l.7 2 2 .7z" fill="#6e6e6e"/></svg>
<div class="hline" style="left:4px;top:135px;width:20px"></div>
<div class="abs" style="left:9px;top:147px;width:10px;height:10px;background:#c2c2c2"></div>
<svg style="left:7px;top:171px" width="15" height="13"><path d="M0 3h4l1.500-2h4L11 3h4v10H0z" fill="#c4c4c4"/><circle cx="7.500" cy="7.800" r="2.800" fill="#f2f2f2"/><circle cx="7.500" cy="7.800" r="1.300" fill="#c4c4c4"/></svg>
<!-- test toolbar y 730..757 -->
<div class="abs" style="left:34px;top:30px;width:21px;height:22px;background:#cfcfcf;border-radius:3px"></div>
<div class="abs" style="left:59px;top:30px;width:22px;height:22px;background:#cfcfcf;border-radius:3px"></div>
<svg style="left:36px;top:33px" width="16" height="16"><path d="M2.500 8.500l3.700 3.700L13.500 4.500" fill="none" stroke="#6e6e6e" stroke-width="2.200"/></svg>
<svg style="left:62px;top:33px" width="16" height="16"><circle cx="8" cy="8" r="6" fill="none" stroke="#6e6e6e" stroke-width="1.900"/><path d="M12 3.500L4 12.500" stroke="#6e6e6e" stroke-width="1.900"/></svg>
<div class="vline" style="left:86px;top:31px;height:20px;background:#cdcdcd"></div>
<svg style="left:95px;top:33px" width="16" height="16"><path d="M4 1.500v10" fill="none" stroke="#6e6e6e" stroke-width="1.900"/><path d="M.8 8.800L4 13.200 7.200 8.800" fill="none" stroke="#6e6e6e" stroke-width="1.900"/><text x="9" y="7" font-family="Liberation Sans" font-size="8.500" font-weight="bold" fill="#6e6e6e">a</text><text x="9.300" y="14.500" font-family="Liberation Sans" font-size="8.500" font-weight="bold" fill="#6e6e6e">z</text></svg>
<svg style="left:121px;top:33px" width="16" height="16"><path d="M4 1.500v10" fill="none" stroke="#6e6e6e" stroke-width="1.900"/><path d="M.8 8.800L4 13.200 7.200 8.800" fill="none" stroke="#6e6e6e" stroke-width="1.900"/><path d="M9 3.500h7M9 7.500h5M11.500 11.500h3" stroke="#6e6e6e" stroke-width="1.900"/></svg>
<div class="vline" style="left:145px;top:31px;height:20px;background:#cdcdcd"></div>
<svg style="left:154px;top:33px" width="16" height="16"><g fill="#6e6e6e"><rect x="2" y="1" width="12" height="1.800"/><rect x="2" y="13.200" width="12" height="1.800"/><path d="M8 4l3 3h-6zM8 12l3-3h-6z"/></g></svg>
<svg style="left:180px;top:33px" width="16" height="16"><g fill="#6e6e6e"><rect x="2" y="7.100" width="12" height="1.800"/><path d="M8 5.500l3-3h-6zM8 10.500l3 3h-6z"/></g></svg>
<div class="vline" style="left:204px;top:31px;height:20px;background:#cdcdcd"></div>
<svg style="left:213px;top:33px" width="16" height="16"><path d="M8 14V3M4 6.500L8 2.500l4 4" fill="none" stroke="#c0c0c0" stroke-width="1.900"/></svg>
<svg style="left:239px;top:33px" width="16" height="16"><path d="M8 2v11M4 9.500l4 4 4-4" fill="none" stroke="#6e6e6e" stroke-width="1.900"/></svg>
<svg style="left:265px;top:33px" width="17" height="17"><circle cx="7.500" cy="7.500" r="5.800" fill="none" stroke="#6e6e6e" stroke-width="1.900"/><path d="M7.500 4v4l2.500 2" fill="none" stroke="#6e6e6e" stroke-width="1.300"/><path d="M11 13h5l-2.500 3z" fill="#4a4a4a"/></svg>
<svg style="left:291px;top:33px" width="16" height="16"><path d="M2.500 3v10.500h10.500" fill="none" stroke="#6e6e6e" stroke-width="1.900"/><path d="M13.500 2.500L6.500 9.500M6 4.500v5.500h5.500" fill="none" stroke="#6e6e6e" stroke-width="1.900"/></svg>
<svg style="left:317px;top:33px" width="16" height="16"><path d="M2.500 5v8.500h8.500" fill="none" stroke="#6e6e6e" stroke-width="1.900"/><path d="M6.500 9.500L13.500 2.500M8 2.500h5.500V8" fill="none" stroke="#6e6e6e" stroke-width="1.900"/></svg>
<div class="vline" style="left:341px;top:31px;height:20px;background:#cdcdcd"></div>
<svg style="left:350px;top:33px" width="18" height="18"><use href="#gear" width="16" height="16"/><path d="M11.500 14h5l-2.500 3z" fill="#4a4a4a"/></svg>
<div class="hline" style="left:29px;top:55px;width:1382px"></div>
<!-- status line -->
<svg style="left:402px;top:34px" width="14" height="14"><circle cx="7" cy="7" r="6.500" fill="#eea431"/><path d="M4.200 4.200l5.600 5.600M9.800 4.200l-5.600 5.600" stroke="#fff" stroke-width="1.900"/></svg>
<span class="abs" style="left:420px;top:34px;color:#a3202a;letter-spacing:-0.32px">Tests failed: 1<span style="color:#8c8c8c;letter-spacing:-0.2px;word-spacing:-0.5px"> of 1 test – 16&#8201;ms</span></span>
<!-- test tree x 44..413 -->
<div class="abs" style="left:29px;top:56px;width:369px;height:136px;background:#fff"></div>
<div class="abs" style="left:29px;top:56px;width:369px;height:20px;background:#d4d4d4"></div>
<svg style="left:32px;top:58px" width="16" height="16"><use href="#chd"/></svg>
<svg style="left:53px;top:59px" width="14" height="14"><circle cx="7" cy="7" r="6.500" fill="#f5b85c"/><path d="M4.200 4.200l5.600 5.600M9.800 4.200l-5.600 5.600" stroke="#fff" stroke-width="1.900"/></svg>
<span class="abs" style="left:71px;top:60px;letter-spacing:-0.13px">CalculatorTest<span style="color:#8c8c8c;letter-spacing:0"> (tech.pdai.tdd.cal)</span></span>
<span class="abs" style="left:367px;top:60px;letter-spacing:-0.7px">16&#8201;ms</span>
<svg style="left:71px;top:79px" width="14" height="14"><circle cx="7" cy="7" r="6.500" fill="#f5b85c"/><path d="M4.200 4.200l5.600 5.600M9.800 4.200l-5.600 5.600" stroke="#fff" stroke-width="1.900"/></svg>
<span class="abs" style="left:89px;top:80px;letter-spacing:0.08px">testAddIntOverflow()</span>
<span class="abs" style="left:367px;top:80px;color:#8c8c8c;letter-spacing:-0.7px">16&#8201;ms</span>
<div class="vline" style="left:398px;top:56px;height:136px;background:#c9c9c9"></div>
<!-- console x 414.. -->
<div class="abs" style="left:399px;top:56px;width:1012px;height:136px;background:#fff"></div>
</div>

<div class="co" style="top:767px">org.opentest4j.AssertionFailedError: Expected java.lang.ArithmeticException to be thrown, but nothing was thrown.</div>
<div class="co" style="top:789px"><span class="fo"> &lt;3 internal lines&gt;</span></div>
<div class="co" style="top:811px">    at tech.pdai.tdd.cal.CalculatorTest.testAddIntOverflow(<span class="lk">CalculatorTest.java:21</span>)<span class="fo"> &lt;31 internal lines&gt;</span></div>
<div class="co" style="top:833px">    at java.util.ArrayList.forEach(<span class="lg">ArrayList.java:1259</span>)<span class="fo"> &lt;9 internal lines&gt;</span></div>
<div class="co" style="top:855px">    at java.util.ArrayList.forEach(<span class="lg">ArrayList.java:1259</span>)<span class="fo"> &lt;25 internal lines&gt;</span></div>
<svg style="left:416px;top:796px" width="9" height="9"><rect x=".5" y=".5" width="8" height="8" fill="#fff" stroke="#d2d2d2"/><path d="M2.500 4.500h4M4.500 2.500v4" stroke="#c4c4c4"/></svg>
<svg style="left:416px;top:818px" width="9" height="9"><rect x=".5" y=".5" width="8" height="8" fill="#fff" stroke="#d2d2d2"/><path d="M2.500 4.500h4M4.500 2.500v4" stroke="#c4c4c4"/></svg>
<svg style="left:416px;top:840px" width="9" height="9"><rect x=".5" y=".5" width="8" height="8" fill="#fff" stroke="#d2d2d2"/><path d="M2.500 4.500h4M4.500 2.500v4" stroke="#c4c4c4"/></svg>
<svg style="left:416px;top:862px" width="9" height="9"><rect x=".5" y=".5" width="8" height="8" fill="#fff" stroke="#d2d2d2"/><path d="M2.500 4.500h4M4.500 2.500v4" stroke="#c4c4c4"/></svg>
<!-- red annotation rects -->
<div class="abs" style="left:527px;top:439px;width:577px;height:129px;border:1px solid #e0202a"></div>
<div class="abs" style="left:50px;top:757px;width:356px;height:55px;border:1px solid #e0202a"></div>

</body>
</html>
